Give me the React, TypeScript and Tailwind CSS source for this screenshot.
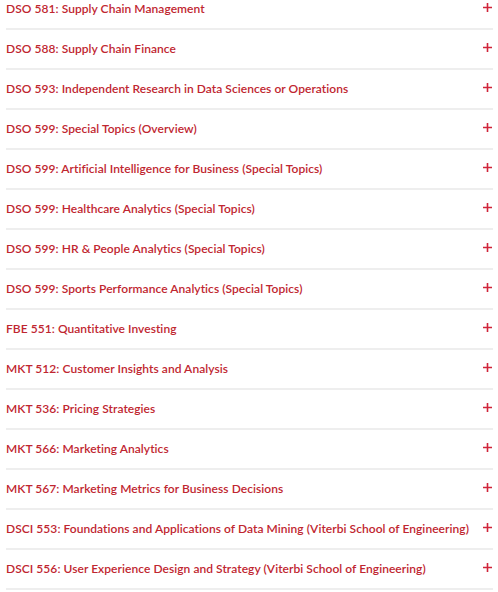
const courses = [
  "DSO 581: Supply Chain Management",
  "DSO 588: Supply Chain Finance",
  "DSO 593: Independent Research in Data Sciences or Operations",
  "DSO 599: Special Topics (Overview)",
  "DSO 599: Artificial Intelligence for Business (Special Topics)",
  "DSO 599: Healthcare Analytics (Special Topics)",
  "DSO 599: HR & People Analytics (Special Topics)",
  "DSO 599: Sports Performance Analytics (Special Topics)",
  "FBE 551: Quantitative Investing",
  "MKT 512: Customer Insights and Analysis",
  "MKT 536: Pricing Strategies",
  "MKT 566: Marketing Analytics",
  "MKT 567: Marketing Metrics for Business Decisions",
  "DSCI 553: Foundations and Applications of Data Mining (Viterbi School of Engineering)",
  "DSCI 556: User Experience Design and Strategy (Viterbi School of Engineering)",
];

const Plus = () => (
  <svg width="9" height="9" viewBox="0 0 9 9" className="shrink-0">
    <path d="M4.5 0v9M0 4.5h9" stroke="#d0243a" strokeWidth="1.6" />
  </svg>
);

export default function App() {
  return (
    <div className="w-[498px] h-[592px] overflow-hidden bg-white font-['Lato',sans-serif]">
      <div className="-mt-[10px] pl-[6px] pr-[5px]">
        {courses.map((c) => (
          <div
            key={c}
            className="flex h-[40px] items-center justify-between gap-2 border-b-2 border-[#eeeeee]"
          >
            <span className="whitespace-nowrap text-[12px] font-semibold tracking-[0.05px] text-[#bf2630]">{c}</span>
            <span className="pr-[1px] pb-[3px]">
              <Plus />
            </span>
          </div>
        ))}
      </div>
    </div>
  );
}
